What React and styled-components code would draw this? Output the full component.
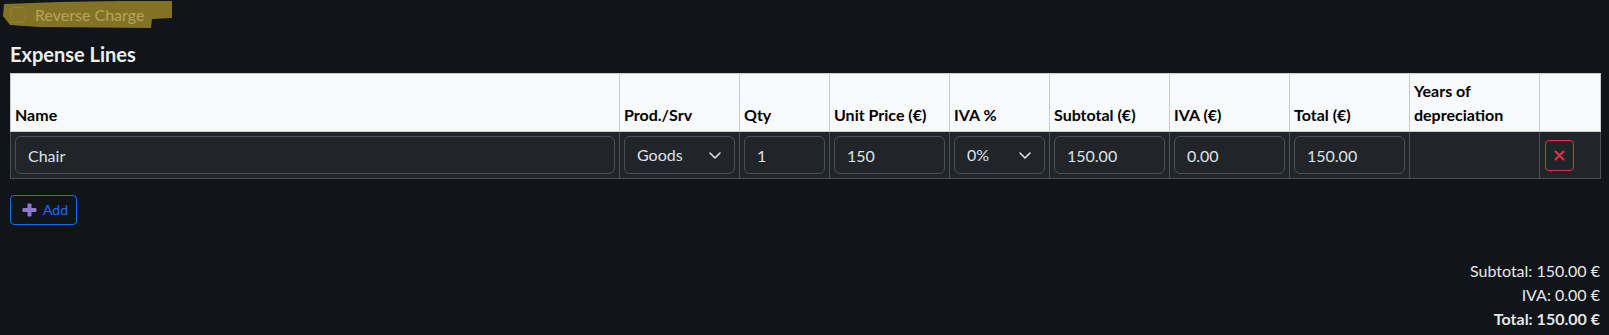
import React from "react";
import styled, { createGlobalStyle } from "styled-components";

const GlobalStyle = createGlobalStyle`
  html, body { margin: 0; padding: 0; background: #111418; }
  body {
    font-family: "Segoe UI", Lato, "Noto Sans", sans-serif;
    font-size: 16px;
    line-height: 1.5;
    color: #dee2e6;
  }
  * { box-sizing: border-box; }
`;

const Page = styled.div`
  padding: 0 9px 4px 10px;
`;

const CheckRow = styled.div`
  position: relative;
  display: flex;
  align-items: center;
  gap: 9px;
  height: 27px;
  padding: 3px 0 0 0;
  margin-bottom: 15px;
`;

const CheckBox = styled.span`
  width: 16px;
  height: 16px;
  border: 1px solid #495057;
  border-radius: 4px;
  background: #15181c;
  flex: none;
`;

const CheckLabel = styled.span`
  font-size: 16px;
  line-height: 24px;
  color: #dee2e6;
`;

const Marker = styled.span`
  position: absolute;
  left: -10px;
  top: 0;
  width: 174px;
  height: 30px;
  background: rgba(166, 145, 42, 0.76);
  clip-path: polygon(4px 4px, 60px 2px, 120px 1px, 172px 1px, 172px 18px, 152px 19px, 151px 28px, 40px 27px, 10px 25px, 3px 16px);
  pointer-events: none;
`;

const Heading = styled.h5`
  margin: 0 0 7px 0;
  font-size: 20px;
  line-height: 24px;
  font-weight: 700;
  color: #eef0f2;
`;

const Table = styled.table`
  width: 1590px;
  table-layout: fixed;
  border-collapse: collapse;
`;

const HeadCell = styled.th`
  background: #f8f9fa;
  color: #000;
  font-weight: 700;
  font-size: 16px;
  line-height: 24px;
  text-align: left;
  vertical-align: bottom;
  padding: 4px;
  border: 1px solid #c9cbcd;
  height: 58px;
`;

const BodyCell = styled.td`
  background: #212529;
  padding: 4px;
  border: 1px solid #495057;
  vertical-align: middle;
`;

const Field = styled.input`
  display: block;
  width: 100%;
  height: 38px;
  padding: 0 12px;
  font: inherit;
  font-size: 16px;
  color: #dee2e6;
  background: #212529;
  border: 1px solid #495057;
  border-radius: 6px;
  outline: none;
`;

const SelectWrap = styled.div`
  position: relative;
`;

const Select = styled.select`
  display: block;
  width: 100%;
  height: 38px;
  padding: 0 36px 0 12px;
  font: inherit;
  font-size: 16px;
  color: #dee2e6;
  background: #212529;
  border: 1px solid #495057;
  border-radius: 6px;
  appearance: none;
  -webkit-appearance: none;
  outline: none;
`;

const Chevron = styled.svg`
  position: absolute;
  right: 12px;
  top: 13px;
  width: 16px;
  height: 12px;
  pointer-events: none;
`;

const DeleteButton = styled.button`
  display: flex;
  align-items: center;
  justify-content: center;
  width: 29px;
  height: 31px;
  margin-left: 1px;
  padding: 0;
  background: transparent;
  border: 1px solid #dc3545;
  border-radius: 4px;
  cursor: pointer;
`;

const AddButton = styled.button`
  display: inline-flex;
  align-items: center;
  gap: 6px;
  height: 30px;
  margin: 16px 0 0 0;
  padding: 0 8px 0 11px;
  font: inherit;
  font-size: 14px;
  line-height: 20px;
  color: #1a6ef5;
  background: transparent;
  border: 1px solid #0d6efd;
  border-radius: 4px;
  cursor: pointer;
`;

const Totals = styled.div`
  margin-top: 34px;
  text-align: right;
  font-size: 16px;
  line-height: 24px;
  color: #e4e7ea;
`;

const TotalLine = styled.div`
  font-weight: ${(p) => (p.$strong ? 700 : 400)};
`;

const columns = [
  { label: "Name", width: 609 },
  { label: "Prod./Srv", width: 120 },
  { label: "Qty", width: 90 },
  { label: "Unit Price (€)", width: 120 },
  { label: "IVA %", width: 100 },
  { label: "Subtotal (€)", width: 120 },
  { label: "IVA (€)", width: 120 },
  { label: "Total (€)", width: 120 },
  { label: "Years of depreciation", width: 130 },
  { label: "", width: 61 },
];

function SelectField({ value, options }) {
  return (
    <SelectWrap>
      <Select defaultValue={value}>
        {options.map((o) => (
          <option key={o}>{o}</option>
        ))}
      </Select>
      <Chevron viewBox="0 0 16 12">
        <path d="M3 4l5 5 5-5" fill="none" stroke="#dee2e6" strokeWidth="1.6" strokeLinecap="round" strokeLinejoin="round" />
      </Chevron>
    </SelectWrap>
  );
}

export default function App() {
  return (
    <>
      <GlobalStyle />
      <Page>
        <CheckRow>
          <CheckBox />
          <CheckLabel>Reverse Charge</CheckLabel>
          <Marker />
        </CheckRow>
        <Heading>Expense Lines</Heading>
        <Table>
          <colgroup>
            {columns.map((c, i) => (
              <col key={i} style={{ width: c.width }} />
            ))}
          </colgroup>
          <thead>
            <tr>
              {columns.map((c, i) => (
                <HeadCell key={i}>{c.label}</HeadCell>
              ))}
            </tr>
          </thead>
          <tbody>
            <tr>
              <BodyCell><Field defaultValue="Chair" /></BodyCell>
              <BodyCell><SelectField value="Goods" options={["Goods", "Services"]} /></BodyCell>
              <BodyCell><Field defaultValue="1" /></BodyCell>
              <BodyCell><Field defaultValue="150" /></BodyCell>
              <BodyCell><SelectField value="0%" options={["0%", "6%", "13%", "23%"]} /></BodyCell>
              <BodyCell><Field defaultValue="150.00" readOnly /></BodyCell>
              <BodyCell><Field defaultValue="0.00" readOnly /></BodyCell>
              <BodyCell><Field defaultValue="150.00" readOnly /></BodyCell>
              <BodyCell />
              <BodyCell>
                <DeleteButton aria-label="Remove">
                  <svg width="11" height="11" viewBox="0 0 11 11">
                    <path d="M1.5 1.5l8 8M9.5 1.5l-8 8" stroke="#dc3545" strokeWidth="2" strokeLinecap="round" />
                  </svg>
                </DeleteButton>
              </BodyCell>
            </tr>
          </tbody>
        </Table>
        <AddButton>
          <svg width="15" height="14" viewBox="0 0 15 14">
            <rect x="5.5" y="0.5" width="4" height="13" rx="1" fill="#8f78d2" />
            <rect x="0.5" y="5" width="14" height="4" rx="1" fill="#8f78d2" />
          </svg>
          Add
        </AddButton>
        <Totals>
          <TotalLine>Subtotal: 150.00 €</TotalLine>
          <TotalLine>IVA: 0.00 €</TotalLine>
          <TotalLine $strong>Total: 150.00 €</TotalLine>
        </Totals>
      </Page>
    </>
  );
}
